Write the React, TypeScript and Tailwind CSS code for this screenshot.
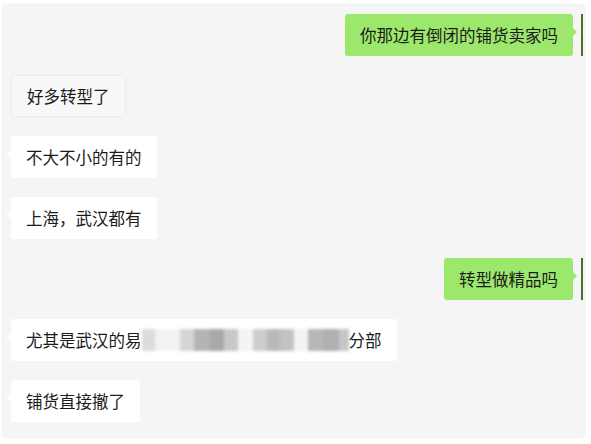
import React from 'react';

const font = '"Noto Sans CJK SC", "Noto Sans", sans-serif';

function Left({ children }: { children: React.ReactNode }) {
  return (
    <div className="flex">
      <div className="relative bg-white px-[15px] py-[10px] text-[16.5px] leading-[22px] text-[#1b1b1b] rounded-[3px]">
        <span className="absolute left-[-4px] top-[14px] h-0 w-0 border-y-[4px] border-r-[4px] border-y-transparent border-r-white" />
        {children}
      </div>
    </div>
  );
}

function Right({ children }: { children: React.ReactNode }) {
  return (
    <div className="flex justify-end items-stretch">
      <div className="relative bg-[#9ce86d] px-[15px] py-[10px] text-[16.5px] leading-[22px] text-[#1b1b1b] rounded-[3px]">
        <span className="absolute right-[-4px] top-[14px] h-0 w-0 border-y-[4px] border-l-[4px] border-y-transparent border-l-[#9ce86d]" />
        {children}
      </div>
      <div className="ml-[8px] w-[2px] bg-[#4d6b2e]" />
    </div>
  );
}

export default function App() {
  return (
    <div className="w-[591px] h-[444px] bg-white pt-[5px] pl-[3px]" style={{ fontFamily: font }}>
      <div className="w-[581px] h-[432px] bg-[#f5f5f6] shadow-[0_0_3px_rgba(0,0,0,0.12)] flex flex-col gap-[19px] pt-[9px] pl-[8px] pr-[1px] overflow-hidden">
        <Right>你那边有倒闭的铺货卖家吗</Right>
        <div className="flex">
          <div className="bg-[#f8f8f8] border border-[#ececec] px-[15px] py-[9px] text-[16.5px] leading-[22px] text-[#1b1b1b] rounded-[3px]">好多转型了</div>
        </div>
        <Left>不大不小的有的</Left>
        <Left>上海，武汉都有</Left>
        <Right>转型做精品吗</Right>
        <Left>
          <span className="flex items-center">
            <span>尤其是武汉的易</span>
            <span className="flex items-center h-[22px] w-[207px] blur-[1.5px]">
              <span className="h-[22px] w-[14px] bg-[#dcdcdc]" />
              <span className="h-[22px] w-[26px] bg-[#f2f2f2]" />
              <span className="h-[22px] w-[14px] bg-[#d6d6d6]" />
              <span className="h-[22px] w-[16px] bg-[#b4b4b4]" />
              <span className="h-[22px] w-[15px] bg-[#a9a9a9]" />
              <span className="h-[22px] w-[14px] bg-[#c8c8c8]" />
              <span className="h-[22px] w-[16px] bg-[#f4f4f4]" />
              <span className="h-[22px] w-[14px] bg-[#cdcdcd]" />
              <span className="h-[22px] w-[14px] bg-[#b9b9b9]" />
              <span className="h-[22px] w-[14px] bg-[#c3c3c3]" />
              <span className="h-[22px] w-[14px] bg-[#f4f4f4]" />
              <span className="h-[22px] w-[16px] bg-[#b7b7b7]" />
              <span className="h-[22px] w-[16px] bg-[#b0b0b0]" />
              <span className="h-[22px] w-[10px] bg-[#c6c6c6]" />
            </span>
            <span>分部</span>
          </span>
        </Left>
        <Left>铺货直接撤了</Left>
      </div>
    </div>
  );
}
